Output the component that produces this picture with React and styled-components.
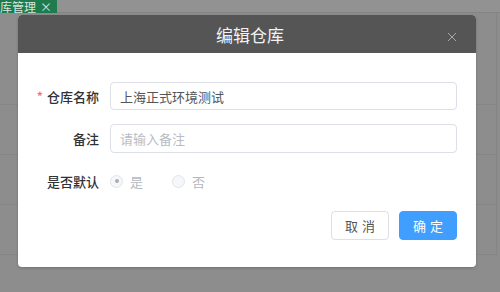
import React from "react";
import styled, { createGlobalStyle } from "styled-components";

const GlobalStyle = createGlobalStyle`
  html, body {
    margin: 0;
    padding: 0;
    width: 500px;
    height: 292px;
    overflow: hidden;
    font-family: "Noto Sans CJK SC", "Noto Sans", sans-serif;
  }
`;

const Page = styled.div`
  position: relative;
  width: 500px;
  height: 292px;
  background: #8d8d8d;
  overflow: hidden;
`;

const TopBar = styled.div`
  height: 12px;
  display: flex;
  background: #929292;
  border-bottom: 1px solid #858585;
`;

const Tab = styled.div`
  width: 57px;
  height: 13px;
  background: #1f7a4d;
  color: #d8e6de;
  font-size: 12px;
  line-height: 12px;
  display: flex;
  align-items: center;
  gap: 4px;
  white-space: nowrap;
  overflow: hidden;
`;

const Table = styled.div`
  display: flex;
  flex-direction: column;
  padding-top: 42px;
  margin-right: 3px;
  border-right: 1px solid #858585;
`;

const Row = styled.div`
  height: 49px;
  border-bottom: 1px solid #868686;
`;

const Modal = styled.div`
  position: absolute;
  left: 18px;
  top: 15px;
  width: 458px;
  height: 252px;
  background: #fff;
  border-radius: 4px;
  overflow: hidden;
  display: flex;
  flex-direction: column;
  box-shadow: 0 1px 3px rgba(0, 0, 0, 0.2);
`;

const Header = styled.div`
  position: relative;
  height: 38px;
  background: #555555;
  display: flex;
  align-items: center;
  justify-content: center;
  color: #f2f2f2;
  font-size: 17px;
  padding-left: 6px;
`;

const Close = styled.div`
  position: absolute;
  right: 19px;
  top: 17px;
  width: 10px;
  height: 10px;
  display: flex;
`;

const Body = styled.div`
  padding: 29px 19px 0 0;
  display: flex;
  flex-direction: column;
  gap: 14px;
`;

const Item = styled.div`
  display: flex;
  align-items: center;
  height: ${(p) => p.h || 28}px;
`;

const Label = styled.div`
  width: 81px;
  padding-right: 11px;
  text-align: right;
  font-size: 13px;
  font-weight: 500;
  color: #303133;
  flex-shrink: 0;
`;

const Star = styled.span`
  color: #f56c6c;
  margin-right: 4px;
`;

const Input = styled.div`
  flex: 1;
  height: 100%;
  box-sizing: border-box;
  border: 1px solid #dcdfe6;
  border-radius: 4px;
  padding: 0 9px;
  display: flex;
  align-items: center;
  font-size: 13px;
  color: ${(p) => (p.placeholder ? "#b8bcc4" : "#555")};
`;

const RadioGroup = styled.div`
  display: flex;
  align-items: center;
`;

const Radio = styled.div`
  display: flex;
  align-items: center;
  gap: 7px;
  width: 62px;
  font-size: 13px;
  color: #b4b7bd;
`;

const Circle = styled.div`
  width: 13px;
  height: 13px;
  box-sizing: border-box;
  border-radius: 50%;
  border: 1px solid #e1e4ea;
  background: #f5f7fa;
  display: flex;
  align-items: center;
  justify-content: center;
  &::after {
    content: "";
    width: 4px;
    height: 4px;
    border-radius: 50%;
    background: ${(p) => (p.checked ? "#a9acb2" : "transparent")};
  }
`;

const Footer = styled.div`
  display: flex;
  justify-content: flex-end;
  gap: 10px;
  padding: 16px 19px 0 0;
`;

const Button = styled.button`
  width: 58px;
  height: 29px;
  box-sizing: border-box;
  border-radius: 4px;
  border: 1px solid ${(p) => (p.primary ? "#409eff" : "#dcdfe6")};
  background: ${(p) => (p.primary ? "#409eff" : "#fff")};
  color: ${(p) => (p.primary ? "#fff" : "#555")};
  font-family: "Noto Sans CJK SC", sans-serif;
  font-size: 13px;
  letter-spacing: 4px;
  padding: 0 0 0 4px;
`;

export default function App() {
  return (
    <>
      <GlobalStyle />
      <Page>
        <TopBar>
          <Tab>
            <span>库管理</span>
            <span>×</span>
          </Tab>
        </TopBar>
        <Table>
          <Row />
          <Row />
          <Row />
          <Row />
        </Table>

        <Modal>
          <Header>
            编辑仓库
            <Close>
              <svg width="10" height="10" viewBox="0 0 10 10">
                <path d="M1 1L9 9M9 1L1 9" stroke="#a8a8a8" strokeWidth="1" />
              </svg>
            </Close>
          </Header>
          <Body>
            <Item>
              <Label>
                <Star>*</Star>仓库名称
              </Label>
              <Input>上海正式环境测试</Input>
            </Item>
            <Item h={29}>
              <Label>备注</Label>
              <Input placeholder="1">请输入备注</Input>
            </Item>
            <Item>
              <Label>是否默认</Label>
              <RadioGroup>
                <Radio>
                  <Circle checked />是
                </Radio>
                <Radio>
                  <Circle />否
                </Radio>
              </RadioGroup>
            </Item>
          </Body>
          <Footer>
            <Button>取消</Button>
            <Button primary>确定</Button>
          </Footer>
        </Modal>
      </Page>
    </>
  );
}
